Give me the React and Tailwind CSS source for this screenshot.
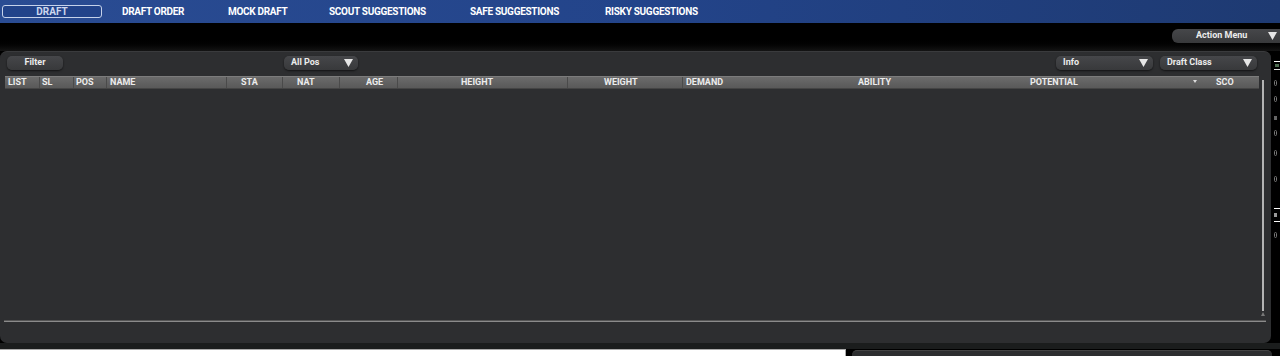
import React from "react";

const tabs = [
  { label: "DRAFT ORDER", w: "w-[106px]", ml: "ml-[20px]" },
  { label: "MOCK DRAFT", w: "w-[101px]" },
  { label: "SCOUT SUGGESTIONS", w: "w-[141px]" },
  { label: "SAFE SUGGESTIONS", w: "w-[135px]" },
  { label: "RISKY SUGGESTIONS", w: "w-[140px]" },
];

const columns = [
  { label: "LIST", w: "w-[35px]", pl: "pl-[3px]", sep: true },
  { label: "SL", w: "w-[34px]", pl: "pl-[2px]", sep: true },
  { label: "POS", w: "w-[33px]", pl: "pl-[2px]", sep: true },
  { label: "NAME", w: "w-[120px]", pl: "pl-[3px]", sep: true },
  { label: "STA", w: "w-[56px]", pl: "pl-[14px]", sep: true },
  { label: "NAT", w: "w-[57px]", pl: "pl-[14px]", sep: true },
  { label: "AGE", w: "w-[58px]", pl: "pl-[26px]", sep: true },
  { label: "HEIGHT", w: "w-[170px]", pl: "pl-[63px]", sep: true },
  { label: "WEIGHT", w: "w-[115px]", pl: "pl-[36px]", sep: true },
  { label: "DEMAND", w: "w-[172px]", pl: "pl-[3px]" },
  { label: "ABILITY", w: "w-[172px]", pl: "pl-[3px]" },
  { label: "POTENTIAL", w: "w-[173px]", pl: "pl-[3px]", sort: true },
  { label: "SCO", w: "w-[59px]", pl: "pl-[16px]" },
];

const Caret = ({ className = "" }) => (
  <svg width="9" height="8" viewBox="0 0 9 8" className={className}>
    <path d="M0 0 H9 L4.5 8 Z" fill="#e6e6e6" />
  </svg>
);

const Dropdown = ({ label, w, ml = "" }) => (
  <div
    className={`${w} ${ml} h-[14px] flex items-center justify-between pl-[7px] pr-[5px] rounded-[5px] bg-linear-to-b from-[#46474a] to-[#38393b] shadow-[0_1px_2px_rgba(0,0,0,0.6)] text-[9px] font-bold text-[#ececec]`}
  >
    <span>{label}</span>
    <Caret />
  </div>
);

const App = () => {
  return (
    <div className="w-[1280px] h-[356px] overflow-hidden bg-black font-['Roboto','Liberation_Sans',sans-serif] select-none">
      {/* top nav */}
      <div className="h-[23px] flex items-center bg-linear-to-r from-[#2a4c93] via-[#23448a] to-[#1e3a72]">
        <div className="ml-[2px] w-[100px] h-[13px] flex items-center justify-center rounded-[3px] border border-[#c6d2ea] bg-[#22438a] text-[10px] font-bold text-[#cdd7ee]">
          DRAFT
        </div>
        {tabs.map((t) => (
          <span
            key={t.label}
            className={`${t.w} ${t.ml || ""} text-[10px] font-bold tracking-[-0.3px] text-white whitespace-nowrap`}
          >
            {t.label}
          </span>
        ))}
      </div>

      {/* action row */}
      <div className="h-[28px] flex justify-end items-start pt-[6px] bg-linear-to-b from-black via-black to-[#141414]">
        <div className="w-[108px] h-[14px] flex items-center justify-between pl-[24px] pr-[3px] rounded-l-[6px] bg-linear-to-b from-[#46474a] to-[#38393b] text-[9px] font-bold text-[#ececec]">
          <span>Action Menu</span>
          <Caret />
        </div>
      </div>

      {/* main */}
      <div className="flex">
        <div className="w-[1271px] h-[292px] flex flex-col rounded-[7px] bg-[#2d2e30] border-t border-[#3a3b3d]">
          {/* toolbar */}
          <div className="mt-[4px] h-[14px] flex items-center">
            <div className="ml-[7px] w-[56px] h-[14px] flex items-center justify-center rounded-[5px] bg-linear-to-b from-[#46474a] to-[#38393b] shadow-[0_1px_2px_rgba(0,0,0,0.6)] text-[9px] font-bold text-[#ececec]">
              Filter
            </div>
            <Dropdown label="All Pos" w="w-[74px]" ml="ml-[221px]" />
            <div className="flex-1" />
            <Dropdown label="Info" w="w-[97px]" />
            <Dropdown label="Draft Class" w="w-[97px]" ml="ml-[7px]" />
            <div className="w-[14px]" />
          </div>

          {/* table */}
          <div className="mt-[6px] flex">
            <div className="ml-[5px] w-[1254px] h-[240px] flex flex-col">
              <div className="h-[13px] flex bg-linear-to-b from-[#6b6b6b] to-[#595959] border-t border-[#7c7c7c] border-b border-b-[#444]">
                {columns.map((c) => (
                  <div
                    key={c.label}
                    className={`${c.w} ${c.pl} relative flex items-center text-[9px] font-bold text-[#ececec] leading-none ${
                      c.sep ? "border-r border-[#4a4a4a]" : ""
                    }`}
                  >
                    {c.label}
                    {c.sort && (
                      <span className="absolute right-[3px] top-[3px] w-0 h-0 border-l-[2px] border-r-[2px] border-t-[3px] border-l-transparent border-r-transparent border-t-[#dcdcdc]" />
                    )}
                  </div>
                ))}
              </div>
              <div className="flex-1" />
            </div>
            {/* scrollbar */}
            <div className="ml-[2px] mt-[4px] h-[236px] flex flex-col items-center">
              <div className="w-[2px] flex-1 bg-[#b3b3b3]" />
              <div className="mt-[1px] w-0 h-0 border-l-[2px] border-r-[2px] border-b-[4px] border-l-transparent border-r-transparent border-b-[#777]" />
            </div>
          </div>

          {/* bottom rule */}
          <div className="mt-[4px] ml-[4px] w-[1262px] h-[2px] bg-[#8b8b8b] border-t border-[#555]" />
        </div>

        {/* clipped side strip */}
        <div className="w-[9px] h-[292px] flex flex-col pl-[3px]">
          <div className="mt-[10px] h-[1px] w-[6px] bg-white" />
          <div className="mt-[2px] ml-[1px] h-[3px] w-[4px] bg-[#4d6b50]" />
          <div className="mt-[2px] h-[1px] w-[6px] bg-[#ddd]" />
          <div className="mt-[10px] h-[6px] w-[3px] border border-[#777] rounded-[2px]" />
          <div className="mt-[10px] h-[6px] w-[3px] border border-[#777] rounded-[2px]" />
          <div className="mt-[14px] h-[4px] w-[3px] bg-[#666]" />
          <div className="mt-[10px] h-[6px] w-[3px] border border-[#777] rounded-[2px]" />
          <div className="mt-[14px] h-[6px] w-[3px] border border-[#777] rounded-[2px]" />
          <div className="mt-[20px] h-[6px] w-[3px] border border-[#777] rounded-[2px]" />
          <div className="mt-[26px] h-[1px] w-[6px] bg-white" />
          <div className="mt-[4px] h-[4px] w-[3px] bg-[#999]" />
          <div className="mt-[4px] h-[1px] w-[6px] bg-white" />
          <div className="mt-[10px] h-[6px] w-[3px] border border-[#777] rounded-[2px]" />
        </div>
      </div>

      {/* bottom */}
      <div className="h-[6px] bg-[#1b1d1d]" />
      <div className="flex items-start">
        <div className="w-[846px] h-[10px] bg-white border-t border-r border-[#aaa]" />
        <div className="ml-[6px] mt-[1px] w-[420px] h-[10px] rounded-t-[5px] bg-[#2d2e30] border-t border-[#444]" />
      </div>
    </div>
  );
};

export default App;
